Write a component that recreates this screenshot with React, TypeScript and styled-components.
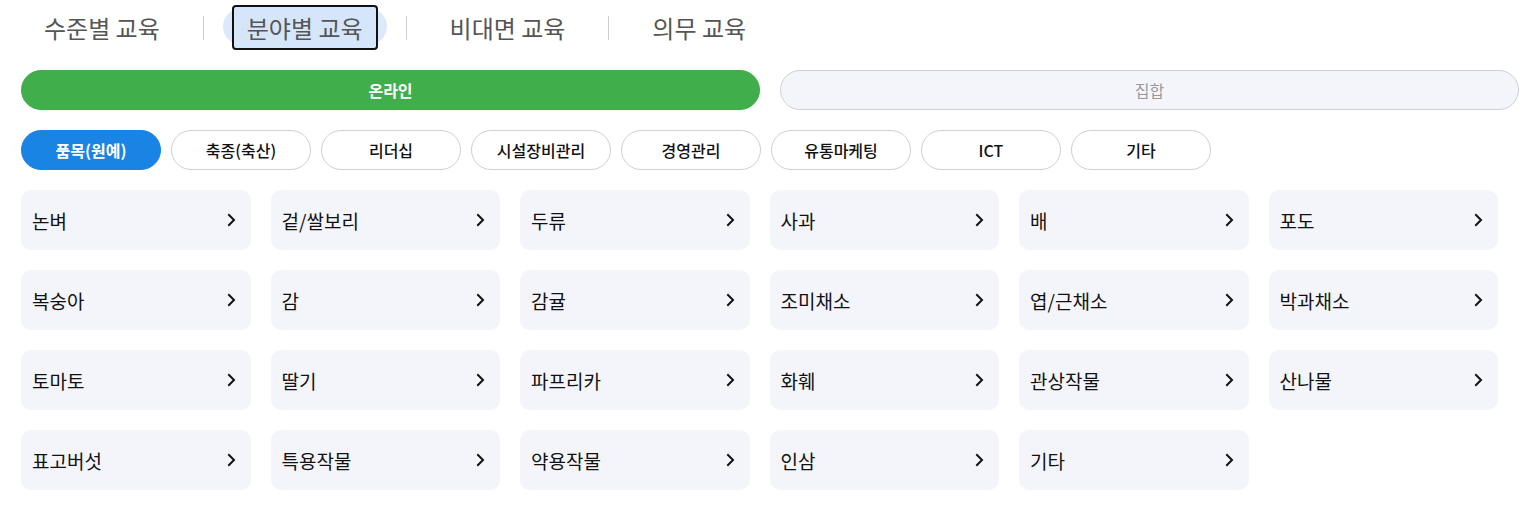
import React from "react";
import styled, { createGlobalStyle, css } from "styled-components";

const GlobalStyle = createGlobalStyle`
  html {
    background: #fff;
  }
  html, body {
    margin: 0;
    padding: 0;
  }
  body {
    font-family: "Noto Sans CJK KR", "Noto Sans", sans-serif;
  }
  * {
    box-sizing: border-box;
  }
`;

const tabs = ["수준별 교육", "분야별 교육", "비대면 교육", "의무 교육"];
const chips = ["품목(원예)", "축종(축산)", "리더십", "시설장비관리", "경영관리", "유통마케팅", "ICT", "기타"];
const items = [
  "논벼", "겉/쌀보리", "두류", "사과", "배", "포도",
  "복숭아", "감", "감귤", "조미채소", "엽/근채소", "박과채소",
  "토마토", "딸기", "파프리카", "화훼", "관상작물", "산나물",
  "표고버섯", "특용작물", "약용작물", "인삼", "기타",
];

export default function App() {
  return (
    <>
      <GlobalStyle />
      <Page>
        <TabBar>
          {tabs.map((t, i) => (
            <React.Fragment key={t}>
              {i > 0 && <Divider />}
              <Tab $active={i === 1}>{t}</Tab>
            </React.Fragment>
          ))}
        </TabBar>

        <ToggleRow>
          <Toggle $on>온라인</Toggle>
          <Toggle>집합</Toggle>
        </ToggleRow>

        <ChipRow>
          {chips.map((c, i) => (
            <Chip key={c} $active={i === 0}>
              {c}
            </Chip>
          ))}
        </ChipRow>

        <Grid>
          {items.map((it, i) => (
            <Card key={i}>
              <span>{it}</span>
              <svg width="9" height="14" viewBox="0 0 9 14" fill="none">
                <path d="M2 2 L7 7 L2 12" stroke="#111" strokeWidth="2" strokeLinecap="square" />
              </svg>
            </Card>
          ))}
        </Grid>
      </Page>
    </>
  );
}

const Page = styled.div`
  width: 1531px;
  height: 528px;
  overflow: hidden;
  padding: 0 12px 0 21px;
`;

const TabBar = styled.div`
  display: flex;
  align-items: center;
  height: 55px;
  padding: 5px 0 5px 8px;
  gap: 28px;
`;

const Divider = styled.span`
  width: 1px;
  height: 24px;
  background: #ccc;
`;

const Tab = styled.button<{ $active?: boolean }>`
  position: relative;
  height: 45px;
  padding: 0 13px;
  border: 2px solid transparent;
  border-radius: 4px;
  background: transparent;
  font-family: "Noto Sans CJK KR", sans-serif;
  font-size: 24px;
  color: #555;
  line-height: 1;
  cursor: pointer;

  ${(p) =>
    p.$active &&
    css`
      border-color: #111;
      background: #d5e6fb;
      &::before {
        content: "";
        position: absolute;
        left: -11px;
        right: -11px;
        top: 1px;
        bottom: 3px;
        border-radius: 22px;
        background: #dde9fb;
        z-index: -1;
      }
    `}
`;

const ToggleRow = styled.div`
  display: grid;
  grid-template-columns: 1fr 1fr;
  gap: 20px;
  margin-top: 15px;
`;

const Toggle = styled.button<{ $on?: boolean }>`
  height: 40px;
  border-radius: 20px;
  font-family: "Noto Sans CJK KR", sans-serif;
  font-size: 16px;
  cursor: pointer;
  ${(p) =>
    p.$on
      ? css`
          background: #3fae4b;
          border: 1px solid #3fae4b;
          color: #fff;
          font-weight: 700;
        `
      : css`
          background: #f4f5fa;
          border: 1px solid #cfd0d6;
          color: #999;
          font-weight: 400;
        `}
`;

const ChipRow = styled.div`
  display: flex;
  gap: 10px;
  margin-top: 20px;
`;

const Chip = styled.button<{ $active?: boolean }>`
  width: 140px;
  height: 40px;
  border-radius: 20px;
  font-family: "Noto Sans CJK KR", sans-serif;
  font-size: 16px;
  cursor: pointer;
  ${(p) =>
    p.$active
      ? css`
          background: #1a84e4;
          border: 1px solid #1a84e4;
          color: #fff;
          font-weight: 700;
        `
      : css`
          background: #fff;
          border: 1px solid #cfd0d6;
          color: #111;
          font-weight: 500;
        `}
`;

const Grid = styled.div`
  display: grid;
  width: 1477px;
  grid-template-columns: repeat(6, 1fr);
  gap: 20px;
  margin-top: 20px;
`;

const Card = styled.div`
  height: 60px;
  display: flex;
  align-items: center;
  justify-content: space-between;
  padding: 0 15px 0 11px;
  background: #f4f5fa;
  border-radius: 10px;
  font-size: 19px;
  color: #111;
  cursor: pointer;
`;
